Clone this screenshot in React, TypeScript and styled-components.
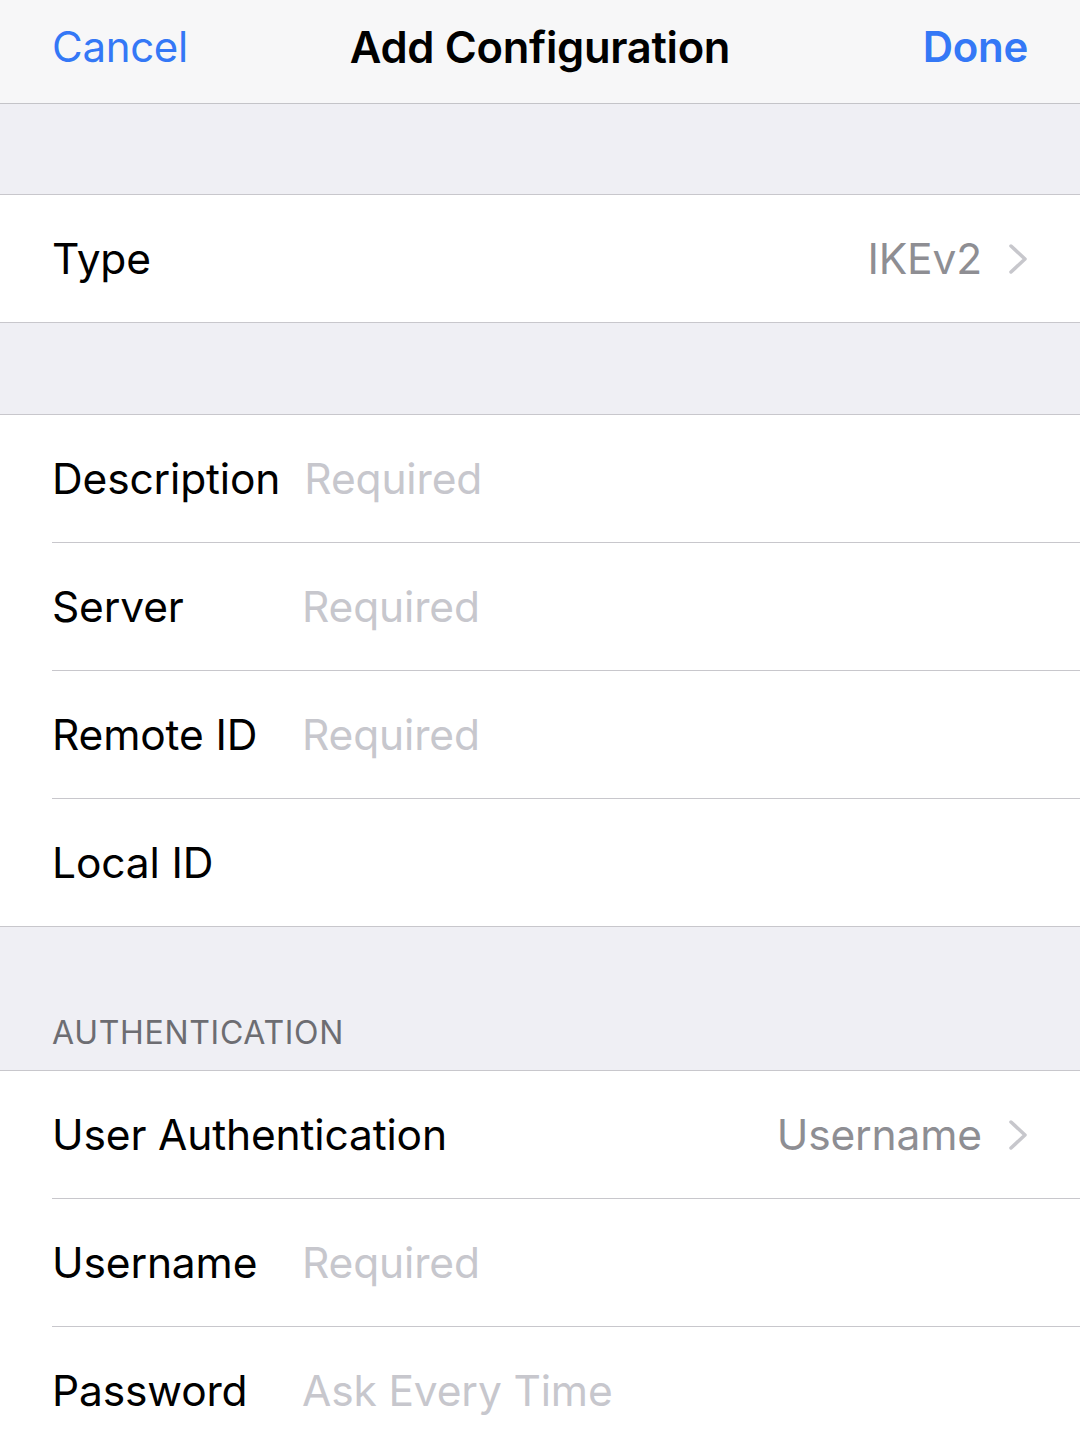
import React from "react";
import styled, { createGlobalStyle } from "styled-components";

const Global = createGlobalStyle`
  html, body { margin: 0; padding: 0; background: #efeff4; }
  body { font-family: Inter, "Noto Sans", "Liberation Sans", sans-serif; -webkit-font-smoothing: antialiased; }
`;

const Page = styled.div`
  width: 1080px;
  height: 1440px;
  overflow: hidden;
  background: #efeff4;
`;

const NavBar = styled.div`
  height: 103px;
  background: #f7f7f8;
  border-bottom: 1px solid #c4c4c8;
  display: grid;
  grid-template-columns: 1fr auto 1fr;
  align-items: center;
  padding: 0 52px 0 52px;
  box-sizing: content-box;
`;

const NavButton = styled.span<{ $bold?: boolean; $right?: boolean }>`
  color: #3478f6;
  font-size: 42px;
  font-weight: ${(p) => (p.$bold ? 600 : 400)};
  justify-self: ${(p) => (p.$right ? "end" : "start")};
  letter-spacing: -0.3px;
  margin-top: -10px;
`;

const Title = styled.span`
  font-size: 43.5px;
  font-weight: 600;
  color: #000;
  letter-spacing: -0.3px;
  margin-top: -10px;
`;

const Gap = styled.div<{ $h: number }>`
  height: ${(p) => p.$h}px;
  border-bottom: 1px solid #c8c7cc;
`;

const SectionHeader = styled.div`
  height: 144px;
  border-bottom: 1px solid #c8c7cc;
  display: flex;
  align-items: flex-end;
  padding: 0 52px 18px;
  box-sizing: border-box;
  color: #6d6d72;
  font-size: 32px;
  letter-spacing: 0.7px;
`;

const Section = styled.div`
  background: #fff;
  border-bottom: 1px solid #c8c7cc;
`;

const Row = styled.div<{ $last?: boolean }>`
  height: 127px;
  margin-left: 52px;
  padding-right: 52px;
  display: flex;
  align-items: center;
  border-bottom: ${(p) => (p.$last ? "none" : "1px solid #c8c7cc")};
  font-size: 42.5px;
  letter-spacing: -0.15px;
`;

const Label = styled.span`
  color: #000;
  min-width: 226px;
  margin-right: 24px;
  white-space: nowrap;
`;

const Placeholder = styled.span`
  color: #c7c7cd;
`;

const Value = styled.span`
  margin-left: auto;
  color: #8e8e93;
  display: flex;
  align-items: center;
  gap: 26px;
`;

const Chevron = () => (
  <svg width="20" height="32" viewBox="0 0 20 32" fill="none">
    <path d="M3 3 L17 16 L3 29" stroke="#c7c7cc" strokeWidth="3.5" strokeLinecap="round" strokeLinejoin="round" />
  </svg>
);

export default function App() {
  return (
    <Page>
      <Global />
      <NavBar>
        <NavButton>Cancel</NavButton>
        <Title>Add Configuration</Title>
        <NavButton $bold $right>Done</NavButton>
      </NavBar>
      <Gap $h={90} />
      <Section>
        <Row $last>
          <Label>Type</Label>
          <Value>IKEv2<Chevron /></Value>
        </Row>
      </Section>
      <Gap $h={91} />
      <Section>
        <Row><Label>Description</Label><Placeholder>Required</Placeholder></Row>
        <Row><Label>Server</Label><Placeholder>Required</Placeholder></Row>
        <Row><Label>Remote ID</Label><Placeholder>Required</Placeholder></Row>
        <Row $last><Label>Local ID</Label></Row>
      </Section>
      <SectionHeader>AUTHENTICATION</SectionHeader>
      <Section>
        <Row><Label>User Authentication</Label><Value>Username<Chevron /></Value></Row>
        <Row><Label>Username</Label><Placeholder>Required</Placeholder></Row>
        <Row $last><Label>Password</Label><Placeholder>Ask Every Time</Placeholder></Row>
      </Section>
    </Page>
  );
}
